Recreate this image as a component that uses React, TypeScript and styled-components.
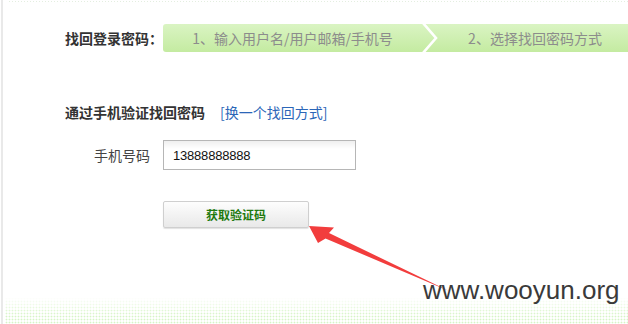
import React from "react";
import styled, { createGlobalStyle } from "styled-components";

const GlobalStyle = createGlobalStyle`
  html, body {
    margin: 0;
    padding: 0;
    background: #fff;
  }
  body {
    font-family: "Liberation Sans", "Noto Sans CJK SC", sans-serif;
    overflow: hidden;
  }
`;

const Page = styled.div`
  position: relative;
  width: 628px;
  height: 324px;
  box-sizing: border-box;
  border-left: 2px solid #e9e9e9;
  margin-left: 1px;
  overflow: hidden;
  &::before {
    content: "";
    display: block;
    height: 1px;
    margin: 1px 0 0 6px;
    background-image: linear-gradient(90deg, #e4eee0 50%, transparent 50%);
    background-size: 3px 1px;
  }
`;

const Content = styled.div`
  display: flex;
  flex-direction: column;
  padding-top: 22px;
`;

const StepRow = styled.div`
  display: flex;
  align-items: center;
  padding-left: 62px;
`;

const Title = styled.div`
  width: 98px;
  font-family: "Noto Sans CJK SC", sans-serif;
  font-size: 14px;
  font-weight: bold;
  color: #333;
  line-height: 20px;
`;

const StepBar = styled.div`
  display: flex;
  height: 28px;
  flex: 1;
  border-radius: 3px 0 0 3px;
  background: linear-gradient(#daf4c3, #c4eba1);
  overflow: hidden;
`;

const Step = styled.div<{ w: number }>`
  flex: 0 0 ${(p) => p.w}px;
  display: flex;
  align-items: center;
  justify-content: center;
  font-family: "Noto Sans CJK SC", sans-serif;
  font-size: 14px;
  color: #8c8c8c;
  line-height: 28px;
  white-space: nowrap;
`;

const Chevron = styled.svg`
  flex: 0 0 17px;
  height: 28px;
`;

const MethodRow = styled.div`
  display: flex;
  align-items: center;
  gap: 15px;
  margin-top: 50px;
  padding-left: 62px;
  line-height: 20px;
`;

const SubTitle = styled.div`
  font-family: "Noto Sans CJK SC", sans-serif;
  font-size: 14px;
  font-weight: bold;
  color: #333;
`;

const SwitchLink = styled.a`
  font-family: "Noto Sans CJK SC", sans-serif;
  font-size: 14px;
  color: #2b66b8;
  text-decoration: none;
  cursor: pointer;
`;

const FieldRow = styled.div`
  display: flex;
  align-items: center;
  margin-top: 18px;
  padding-left: 62px;
`;

const FieldLabel = styled.label`
  width: 85px;
  margin-right: 13px;
  text-align: right;
  font-family: "Noto Sans CJK SC", sans-serif;
  font-size: 14px;
  color: #444;
`;

const PhoneInput = styled.input`
  box-sizing: border-box;
  width: 193px;
  height: 30px;
  padding: 0 9px;
  border: 1px solid #b6b6b6;
  background: linear-gradient(#efefef, #fff 8px);
  font-family: "Liberation Sans", sans-serif;
  font-size: 13px;
  letter-spacing: -0.2px;
  color: #111;
  outline: none;
`;

const ButtonRow = styled.div`
  display: flex;
  margin-top: 31px;
  padding-left: 160px;
`;

const CodeButton = styled.button`
  box-sizing: border-box;
  width: 146px;
  height: 27px;
  border: 1px solid #cfcfcf;
  border-radius: 2px;
  background: linear-gradient(#fdfdfd, #e9e9e9);
  box-shadow: 0 1px 1px rgba(0, 0, 0, 0.12);
  font-family: "Noto Sans CJK SC", sans-serif;
  font-size: 12px;
  font-weight: bold;
  color: #1f7a0f;
  cursor: pointer;
  padding: 0;
`;

const Dots = styled.div`
  position: absolute;
  left: 2px;
  right: 0;
  bottom: 0;
  height: 27px;
  background-image: radial-gradient(circle, #d6f4c6 0.8px, transparent 1.1px);
  background-size: 3px 3px;
  -webkit-mask-image: linear-gradient(transparent, #000 70%);
  mask-image: linear-gradient(transparent, #000 70%);
`;

const Overlay = styled.svg`
  position: absolute;
  left: -3px;
  top: 0;
  pointer-events: none;
`;

const Watermark = styled.div`
  position: absolute;
  left: 420px;
  top: 275px;
  font-family: "Liberation Sans", sans-serif;
  font-size: 26px;
  line-height: 30px;
  color: #3a3a3a;
`;

const App = () => {
  return (
    <Page>
      <GlobalStyle />
      <Content>
        <StepRow>
          <Title>找回登录密码：</Title>
          <StepBar>
            <Step w={259}>1、输入用户名/用户邮箱/手机号</Step>
            <Chevron viewBox="0 0 17 28">
              <polyline
                points="1,-1 14,14 1,29"
                fill="none"
                stroke="#fff"
                strokeWidth="2.6"
              />
            </Chevron>
            <Step w={192}>2、选择找回密码方式</Step>
          </StepBar>
        </StepRow>
        <MethodRow>
          <SubTitle>通过手机验证找回密码</SubTitle>
          <SwitchLink>[换一个找回方式]</SwitchLink>
        </MethodRow>
        <FieldRow>
          <FieldLabel>手机号码</FieldLabel>
          <PhoneInput defaultValue="13888888888" />
        </FieldRow>
        <ButtonRow>
          <CodeButton>获取验证码</CodeButton>
        </ButtonRow>
      </Content>
      <Dots />
      <Overlay width="628" height="324">
        <polygon
          points="309,226 334,227.5 329,233 449,291 325.5,238.5 318,243"
          fill="#f23d3d"
        />
      </Overlay>
      <Watermark>www.wooyun.org</Watermark>
    </Page>
  );
};

export default App;
